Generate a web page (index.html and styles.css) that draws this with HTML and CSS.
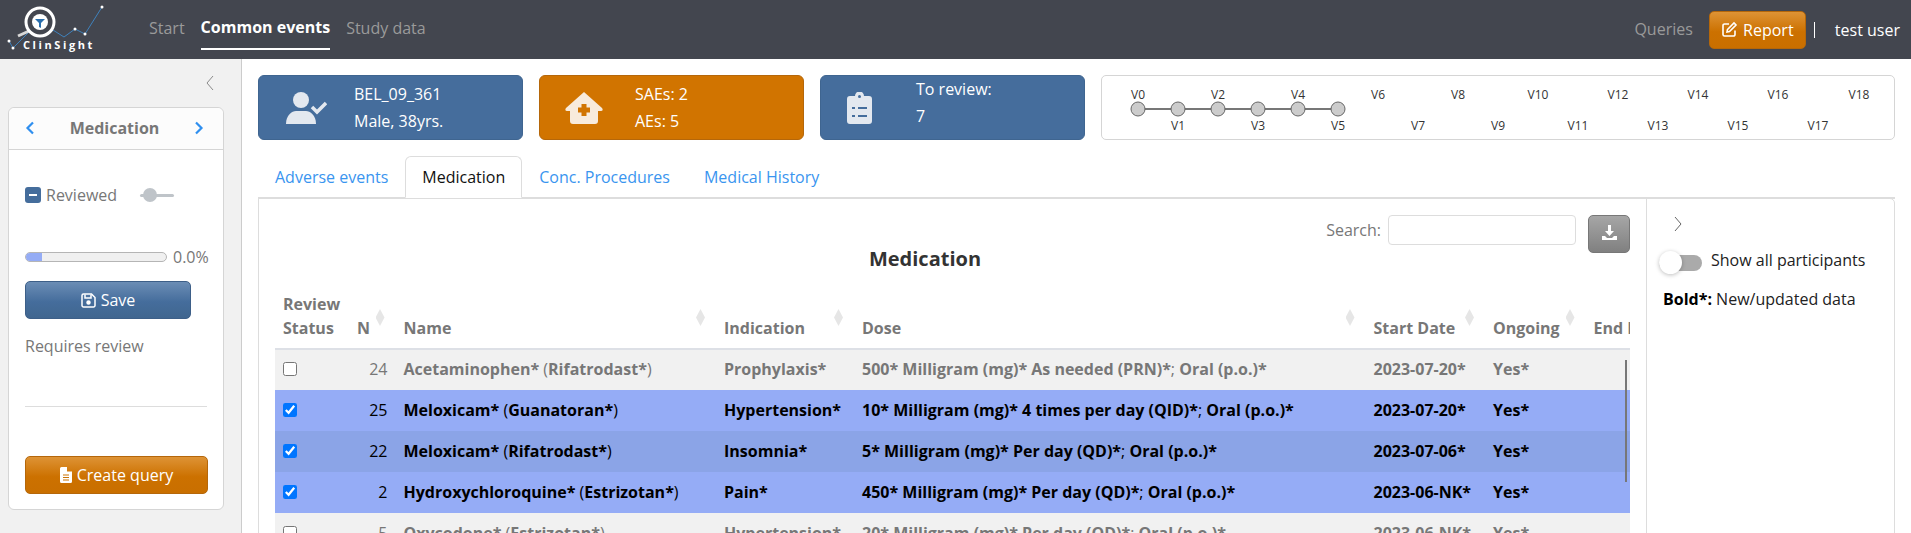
FILE: index.html
```html
<!DOCTYPE html>
<html lang="en">
<head>
  <meta charset="UTF-8">
  <meta name="viewport" content="width=device-width, initial-scale=1.0">
  <title>ClinSight - Common events</title>
  <link rel="stylesheet" href="styles.css">
</head>
<body>
  <header class="navbar">
    <svg class="logo" width="110" height="59" viewBox="0 0 110 59">
      <polyline points="9,41 13,48 33,28 45,25 64,37 75,29 85,34 102,7" fill="none" stroke="#3f82bd" stroke-width="1"/>
      <circle cx="9" cy="41" r="1.5" fill="#fff"/>
      <circle cx="13" cy="48" r="1.5" fill="#fff"/>
      <circle cx="75" cy="29" r="1.5" fill="#fff"/>
      <circle cx="85" cy="34" r="1.5" fill="#fff"/>
      <circle cx="102" cy="7" r="1.5" fill="#fff"/>
      <line x1="29" y1="31" x2="18" y2="36" stroke="#d8d8d8" stroke-width="3"/>
      <circle cx="40" cy="22" r="14" fill="#43464f" stroke="#fff" stroke-width="3"/>
      <circle cx="40" cy="22" r="8" fill="#fff"/>
      <path d="M35 19h10l-4 4v5l-2-1v-4z" fill="#2a6fae"/>
      <text x="23" y="49" class="logo-text">ClinSight</text>
    </svg>
    <nav class="nav-left">
      <a href="#" class="nav-link">Start</a>
      <a href="#" class="nav-link active">Common events</a>
      <a href="#" class="nav-link">Study data</a>
    </nav>
    <div class="nav-right">
      <a href="#" class="nav-link">Queries</a>
      <button class="btn btn-orange btn-report">
        <svg width="17" height="17" viewBox="0 0 17 17" fill="none" stroke="#fff" stroke-width="1.6"><path d="M8 3H3.500A1.500 1.500 0 0 0 2 4.500v9A1.500 1.500 0 0 0 3.500 15h9a1.500 1.500 0 0 0 1.500-1.500V9.500"/><path d="M6.500 8.500 13 2l2 2-6.500 6.500-2.500.5z"/></svg>
        Report
      </button>
      <span class="nav-sep"></span>
      <span class="nav-user">test user</span>
    </div>
  </header>

  <div class="page">
    <aside class="sidebar">
      <div class="collapse-row">
        <svg width="10" height="16" viewBox="0 0 10 16" fill="none" stroke="#8a8a8a"><path d="M8 1 2 8l6 7"/></svg>
      </div>
      <div class="side-card">
        <div class="side-card-head">
          <svg width="10" height="14" viewBox="0 0 10 14" fill="none" stroke="#2f8fef" stroke-width="2.200"><path d="M8 1.500 2.500 7 8 12.500"/></svg>
          <span>Medication</span>
          <svg width="10" height="14" viewBox="0 0 10 14" fill="none" stroke="#2f8fef" stroke-width="2.200"><path d="M2 1.500 7.500 7 2 12.500"/></svg>
        </div>
        <div class="side-card-body">
          <div class="review-row">
            <span class="check-minus"></span>
            <span class="review-label">Reviewed</span>
            <span class="mini-slider"></span>
          </div>
          <div class="progress-row">
            <div class="progress"><div class="progress-bar"></div></div>
            <span>0.0%</span>
          </div>
          <button class="btn btn-blue btn-save">
            <svg width="15" height="15" viewBox="0 0 15 15" fill="none" stroke="#fff" stroke-width="1.500"><path d="M2.500 1h8l3.500 3.500v8a1.500 1.500 0 0 1-1.500 1.500h-10A1.500 1.500 0 0 1 1 12.500v-10A1.500 1.500 0 0 1 2.500 1z"/><path d="M4 1.500V5h6V1.500"/><circle cx="7.500" cy="9.500" r="1.500" fill="#fff"/></svg>
            Save
          </button>
          <p class="requires">Requires review</p>
          <hr class="side-line">
          <button class="btn btn-orange btn-query">
            <svg width="12" height="16" viewBox="0 0 12 16"><path d="M1.500 0H7v4.500h5v10a1.500 1.500 0 0 1-1.500 1.500h-9A1.500 1.500 0 0 1 0 14.500v-13A1.500 1.500 0 0 1 1.500 0z" fill="#fff"/><path d="M3 8h6M3 10.500h6M3 13h6" stroke="#cc7405" stroke-width="1.200"/></svg>
            Create query
          </button>
        </div>
      </div>
    </aside>

    <main class="content">
      <div class="top-row">
        <div class="value-box box-blue">
          <svg class="box-icon icon-user" width="41" height="32" viewBox="0 0 41 32" fill="#e3e8ef"><circle cx="15" cy="8" r="8"/><path d="M0 32c0-9 6-13 10-13h10c4 0 10 4 10 13z"/><path d="M26 15l5 5 9-9" fill="none" stroke="#e3e8ef" stroke-width="3.500"/></svg>
          <div class="box-text"><div>BEL_09_361</div><div>Male, 38yrs.</div></div>
        </div>
        <div class="value-box box-orange">
          <svg class="box-icon icon-house" width="38" height="32" viewBox="0 0 38 32"><path d="M19 0 37 16c1 1 1 3-1 3h-3v10a3 3 0 0 1-3 3H8a3 3 0 0 1-3-3V19H2c-2 0-2-2-1-3z" fill="#f8ebdc"/><path d="M16.500 12h5v3.500H25v5h-3.500V24h-5v-3.500H13v-5h3.500z" fill="#d17400"/></svg>
          <div class="box-text"><div>SAEs: 2</div><div>AEs: 5</div></div>
        </div>
        <div class="value-box box-blue">
          <svg class="box-icon icon-clip" width="25" height="32" viewBox="0 0 25 32"><path d="M3 4h5a4.500 4.500 0 0 1 9 0h5a3 3 0 0 1 3 3v22a3 3 0 0 1-3 3H3a3 3 0 0 1-3-3V7a3 3 0 0 1 3-3z" fill="#e3e8ef"/><circle cx="12.500" cy="4.500" r="1.500" fill="#456d9c"/><path d="M5 16h3M5 24h3M11 16h9M11 24h9" stroke="#456d9c" stroke-width="2.200"/></svg>
          <div class="box-text box-text-up"><div>To review:</div><div>7</div></div>
        </div>
        <div class="timeline-box">
          <svg width="792" height="63" viewBox="0 0 792 63" class="timeline">
            <line x1="36" y1="33" x2="236" y2="33" stroke="#777" stroke-width="2"/>
            <g fill="#ccc" stroke="#666">
              <circle cx="36" cy="33" r="7"/><circle cx="76" cy="33" r="7"/><circle cx="116" cy="33" r="7"/>
              <circle cx="156" cy="33" r="7"/><circle cx="196" cy="33" r="7"/><circle cx="236" cy="33" r="7"/>
            </g>
            <g text-anchor="middle" class="tl-label">
              <text x="36" y="23">V0</text><text x="76" y="54">V1</text>
              <text x="116" y="23">V2</text><text x="156" y="54">V3</text>
              <text x="196" y="23">V4</text><text x="236" y="54">V5</text>
              <text x="276" y="23">V6</text><text x="316" y="54">V7</text>
              <text x="356" y="23">V8</text><text x="396" y="54">V9</text>
              <text x="436" y="23">V10</text><text x="476" y="54">V11</text>
              <text x="516" y="23">V12</text><text x="556" y="54">V13</text>
              <text x="596" y="23">V14</text><text x="636" y="54">V15</text>
              <text x="676" y="23">V16</text><text x="716" y="54">V17</text>
              <text x="757" y="23">V18</text>
            </g>
          </svg>
        </div>
      </div>

      <ul class="tabs">
        <li><a href="#">Adverse events</a></li>
        <li class="active"><a href="#">Medication</a></li>
        <li><a href="#">Conc. Procedures</a></li>
        <li><a href="#">Medical History</a></li>
      </ul>

      <div class="tab-panel">
        <section class="table-area">
          <div class="table-tools">
            <label class="search-label">Search:</label>
            <input class="search-input" type="text">
            <button class="btn-download">
              <svg width="17" height="17" viewBox="0 0 17 17" fill="#fff"><path d="M7 1h3v6h3l-4.500 5L4 7h3z"/><path d="M1 12h3l2 2h5l2-2h3v4H1z"/></svg>
            </button>
          </div>
          <h2 class="table-title">Medication</h2>
          <div class="table-wrap">
            <table class="data-table">
              <colgroup>
                <col class="c-status"><col class="c-n"><col class="c-name"><col class="c-ind">
                <col class="c-dose"><col class="c-date"><col class="c-ongoing"><col class="c-end">
              </colgroup>
              <thead>
                <tr>
                  <th>Review<br>Status</th>
                  <th class="sortable">N</th>
                  <th class="sortable">Name</th>
                  <th class="sortable">Indication</th>
                  <th class="sortable">Dose</th>
                  <th class="sortable">Start Date</th>
                  <th class="sortable">Ongoing</th>
                  <th>End Date</th>
                </tr>
              </thead>
              <tbody>
                <tr class="row-plain">
                  <td><input type="checkbox"></td><td class="num">24</td>
                  <td><b>Acetaminophen*</b> (<b>Rifatrodast*</b>)</td><td><b>Prophylaxis*</b></td>
                  <td><b>500*</b> <b>Milligram (mg)*</b> <b>As needed (PRN)*</b>; <b>Oral (p.o.)*</b></td>
                  <td><b>2023-07-20*</b></td><td><b>Yes*</b></td><td></td>
                </tr>
                <tr class="row-sel">
                  <td><input type="checkbox" checked></td><td class="num">25</td>
                  <td><b>Meloxicam*</b> (<b>Guanatoran*</b>)</td><td><b>Hypertension*</b></td>
                  <td><b>10*</b> <b>Milligram (mg)*</b> <b>4 times per day (QID)*</b>; <b>Oral (p.o.)*</b></td>
                  <td><b>2023-07-20*</b></td><td><b>Yes*</b></td><td></td>
                </tr>
                <tr class="row-sel row-dark">
                  <td><input type="checkbox" checked></td><td class="num">22</td>
                  <td><b>Meloxicam*</b> (<b>Rifatrodast*</b>)</td><td><b>Insomnia*</b></td>
                  <td><b>5*</b> <b>Milligram (mg)*</b> <b>Per day (QD)*</b>; <b>Oral (p.o.)*</b></td>
                  <td><b>2023-07-06*</b></td><td><b>Yes*</b></td><td></td>
                </tr>
                <tr class="row-sel">
                  <td><input type="checkbox" checked></td><td class="num">2</td>
                  <td><b>Hydroxychloroquine*</b> (<b>Estrizotan*</b>)</td><td><b>Pain*</b></td>
                  <td><b>450*</b> <b>Milligram (mg)*</b> <b>Per day (QD)*</b>; <b>Oral (p.o.)*</b></td>
                  <td><b>2023-06-NK*</b></td><td><b>Yes*</b></td><td></td>
                </tr>
                <tr class="row-plain">
                  <td><input type="checkbox"></td><td class="num">5</td>
                  <td><b>Oxycodone*</b> (<b>Estrizotan*</b>)</td><td><b>Hypertension*</b></td>
                  <td><b>20*</b> <b>Milligram (mg)*</b> <b>Per day (QD)*</b>; <b>Oral (p.o.)*</b></td>
                  <td><b>2023-06-NK*</b></td><td><b>Yes*</b></td><td></td>
                </tr>
              </tbody>
            </table>
            <div class="scroll-thumb"></div>
          </div>
        </section>
        <aside class="side-panel">
          <svg class="panel-chevron" width="10" height="16" viewBox="0 0 10 16" fill="none" stroke="#666"><path d="M2 1l6 7-6 7"/></svg>
          <div class="switch-row">
            <span class="switch"></span>
            <span>Show all participants</span>
          </div>
          <p class="legend"><b>Bold*:</b> New/updated data</p>
        </aside>
      </div>
    </main>
  </div>
</body>
</html>
```

FILE: styles.css
```css
* { margin: 0; padding: 0; box-sizing: border-box; font-family: 'Open Sans', sans-serif; }
html, body { height: 100%; overflow: hidden; }
body { background-color: #fff; color: #777; font-size: 16px; }
a { text-decoration: none; }

/* Navbar */
.navbar {
  display: flex;
  align-items: stretch;
  height: 59px;
  background-color: #43464f;
}
.logo { flex: none; }
.logo-text { font-family: 'Open Sans', sans-serif; font-size: 11px; font-weight: 700; fill: #fff; letter-spacing: 2.600px; }
.nav-left { display: flex; gap: 16px; margin-left: 39px; }
.nav-link {
  display: flex;
  align-items: center;
  height: 50px;
  padding-top: 6px;
  color: #9a9a9a;
  font-size: 16px;
}
.nav-link.active { color: #fff; font-weight: 700; border-bottom: 2px solid #fff; }
.nav-right { display: flex; align-items: center; margin-left: auto; padding-right: 11px; }
.nav-right .nav-link { padding-top: 0; margin-top: -1px; }
.nav-sep { width: 1px; height: 16px; background-color: #fff; margin: 0 20px 0 8px; }
.nav-user { color: #fff; font-size: 16px; }

/* Buttons */
.btn {
  display: flex;
  align-items: center;
  justify-content: center;
  gap: 5px;
  height: 38px;
  color: #fff;
  font-size: 16px;
  border-radius: 5px;
  cursor: pointer;
}
.btn-orange {
  background: linear-gradient(#de9335, #cc7100 55%, #c96f00);
  border: 1px solid #b5670a;
}
.btn-blue {
  background: linear-gradient(#6b8db5, #456d9c 55%, #40668f);
  border: 1px solid #3d5f88;
}
.btn-report { width: 97px; margin-left: 16px; }

/* Sidebar */
.page { display: flex; height: 474px; }
.sidebar {
  flex: none;
  width: 242px;
  padding: 16px 17px 0 8px;
  background-color: #f1f1f1;
  border-right: 1px solid #ccc;
}
.collapse-row { display: flex; justify-content: flex-end; padding-right: 9px; height: 32px; }
.side-card {
  height: 403px;
  background-color: #fff;
  border: 1px solid #d5d5d5;
  border-radius: 6px;
}
.side-card-head {
  display: flex;
  align-items: center;
  justify-content: space-between;
  height: 42px;
  padding: 0 19px 2px 16px;
  background-color: #fcfcfc;
  border-bottom: 1px solid #d5d5d5;
  border-radius: 6px 6px 0 0;
  font-size: 16px;
  font-weight: 700;
}
.side-card-body { padding: 37px 16px 0; }
.review-row { display: flex; align-items: center; height: 16px; }
.check-minus {
  position: relative;
  width: 16px;
  height: 16px;
  background-color: #456d9c;
  border-radius: 3px;
}
.check-minus::after {
  content: "";
  position: absolute;
  left: 4px;
  top: 7px;
  width: 8px;
  height: 2px;
  background-color: #fff;
}
.review-label { margin-left: 5px; }
.mini-slider {
  position: relative;
  width: 34px;
  height: 3px;
  margin-left: 23px;
  background-color: #bfc4c9;
  border-radius: 2px;
}
.mini-slider::before {
  content: "";
  position: absolute;
  left: 3px;
  top: -6px;
  width: 14px;
  height: 14px;
  background-color: #bfc4c9;
  border-radius: 50%;
}
.progress-row { display: flex; align-items: center; gap: 6px; margin-top: 41px; height: 26px; }
.progress {
  flex: none;
  width: 142px;
  height: 10px;
  background-color: #f0f0f0;
  border: 1px solid #b5b5b5;
  border-radius: 5px;
  overflow: hidden;
}
.progress-bar { width: 16px; height: 100%; background-color: #95acf5; }
.btn-save { width: 166px; margin-top: 11px; }
.requires { margin-top: 15px; line-height: 24px; }
.side-line { border: none; border-top: 1px solid #ddd; margin-top: 48px; }
.btn-query { width: 183px; margin-top: 49px; }

/* Main content */
.content { flex: 1; min-width: 0; padding: 16px 16px 0; }
.top-row { display: flex; gap: 16px; height: 65px; }
.value-box {
  position: relative;
  flex: none;
  display: flex;
  align-items: center;
  width: 265px;
  border-radius: 6px;
  color: #fff;
  font-size: 16px;
}
.box-blue { background-color: #456d9c; border: 1px solid #3f6590; }
.box-orange { background-color: #d17400; border: 1px solid #b5670a; }
.box-icon { position: absolute; top: 16px; }
.icon-user { left: 27px; }
.icon-house { left: 25px; }
.icon-clip { left: 26px; }
.box-text { margin-left: 95px; line-height: 27px; }
.box-text-up { margin-top: -10px; }
.timeline-box {
  flex: 1;
  background-color: #fff;
  border: 1px solid #d5d5d5;
  border-radius: 5px;
}
.timeline { display: block; }
.tl-label { font-family: 'Liberation Sans', sans-serif; font-size: 12px; fill: #333; }

/* Tabs */
.tabs {
  display: flex;
  list-style: none;
  margin-top: 16px;
  height: 43px;
  border-bottom: 2px solid #ddd;
}
.tabs a {
  display: block;
  height: 42px;
  padding: 0 16px;
  line-height: 40px;
  color: #3a95ef;
  font-size: 16px;
  border: 1px solid transparent;
}
.tabs .active a {
  background-color: #fff;
  color: #111;
  border-color: #ddd;
  border-bottom-color: #fff;
  border-radius: 6px 6px 0 0;
}

.tab-panel {
  display: flex;
  height: 340px;
  margin-top: -1px;
  border: 1px solid #ddd;
  border-radius: 0 5px 0 0;
}

/* Table */
.table-area { width: 1387px; padding: 16px 16px 0; flex: none; }
.table-tools { display: flex; align-items: flex-start; justify-content: flex-end; height: 38px; }
.search-label { margin-right: 7px; line-height: 30px; }
.search-input {
  width: 188px;
  height: 30px;
  border: 1px solid #ddd;
  border-radius: 4px;
}
.btn-download {
  width: 42px;
  height: 38px;
  margin-left: 12px;
  background: linear-gradient(#a6a6a6, #808080);
  border: 1px solid #777;
  border-radius: 5px;
}
.table-title {
  margin-top: -6px;
  padding-right: 55px;
  text-align: center;
  color: #333;
  font-size: 20px;
  font-weight: 700;
  line-height: 24px;
}
.table-wrap { position: relative; height: 270px; margin-top: 18px; overflow: hidden; }
.data-table { table-layout: fixed; width: 1434px; border-collapse: collapse; font-size: 16px; }
.c-status { width: 74px; }
.c-n { width: 46.500px; }
.c-name { width: 320.500px; }
.c-ind { width: 138px; }
.c-dose { width: 511.500px; }
.c-date { width: 119.500px; }
.c-ongoing { width: 100.500px; }
.c-end { width: 123.500px; }
.data-table th {
  position: relative;
  height: 60px;
  padding: 0 8px 8px;
  vertical-align: bottom;
  text-align: left;
  font-weight: 700;
  line-height: 24px;
  border-bottom: 2px solid #dde0e6;
  white-space: nowrap;
}
.data-table th.sortable::after {
  content: "";
  position: absolute;
  right: 11px;
  top: 20px;
  width: 9px;
  height: 17px;
  background-color: #e6e6e6;
  clip-path: polygon(50% 0, 100% 50%, 50% 100%, 0 50%);
}
.data-table td {
  height: 41px;
  padding: 0 8px 2px;
  white-space: nowrap;
  vertical-align: middle;
}
.data-table td b { font-weight: 700; }
.data-table td input { display: block; width: 14px; height: 14px; }
.data-table .num { text-align: right; }
.row-plain td { background-color: #f1f1f1; color: #777; }
.row-sel td { background-color: #95acf6; color: #000; }
.row-dark td { background-color: #8ba4e7; }
.scroll-thumb {
  position: absolute;
  right: 3px;
  top: 71px;
  width: 2px;
  height: 122px;
  background-color: #777;
}

/* Right panel */
.side-panel { flex: 1; padding: 17px 0 0 16px; border-left: 1px solid #ddd; color: #222; }
.panel-chevron { display: block; margin-left: 10px; }
.switch-row { display: flex; align-items: center; gap: 9px; margin-top: 13px; margin-left: -4px; height: 30px; font-size: 16px; }
.switch {
  position: relative;
  flex: none;
  width: 43px;
  height: 16px;
  margin-top: 6px;
  background-color: #aaa;
  border-radius: 8px;
}
.switch::before {
  content: "";
  position: absolute;
  left: 0;
  top: -4px;
  width: 23px;
  height: 23px;
  background-color: #fff;
  border-radius: 50%;
  box-shadow: 0 1px 4px rgba(0, 0, 0, 0.25);
}
.legend { margin-top: 13px; font-size: 16px; }
.legend b { font-weight: 700; color: #000; }
```
